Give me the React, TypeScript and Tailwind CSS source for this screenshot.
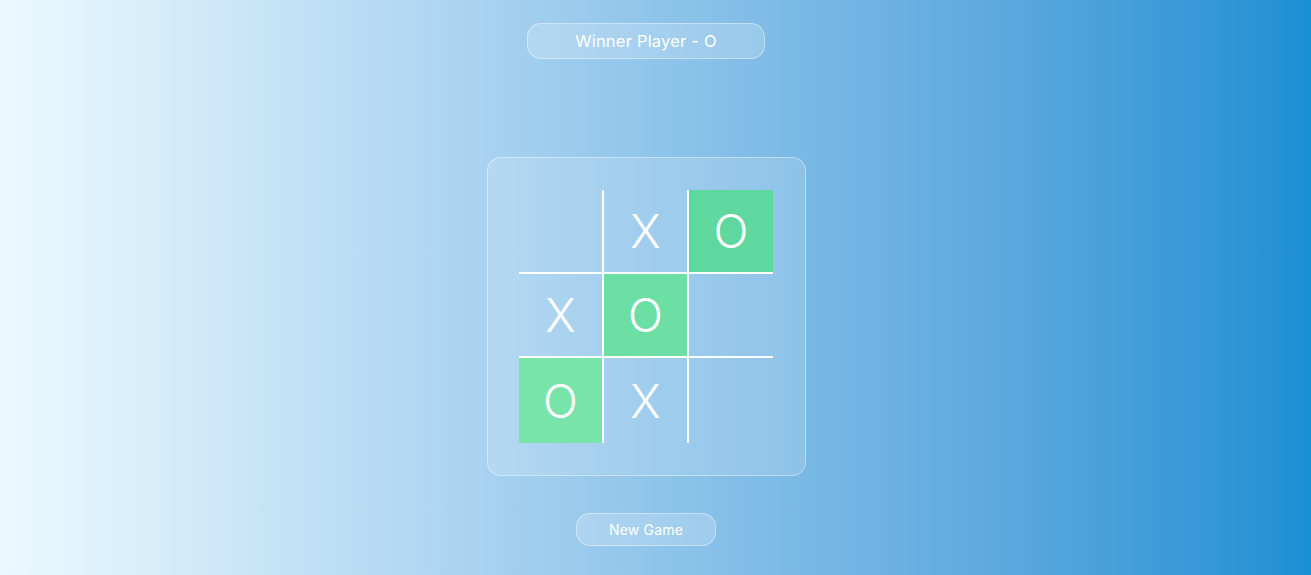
import React from 'react';

const board: { v: string; bg: string }[] = [
  { v: '', bg: '' },
  { v: 'X', bg: '' },
  { v: 'O', bg: 'bg-[#5fd8a0]' },
  { v: 'X', bg: '' },
  { v: 'O', bg: 'bg-[#6cdfa5]' },
  { v: '', bg: '' },
  { v: 'O', bg: 'bg-[#78e4a9]' },
  { v: 'X', bg: '' },
  { v: '', bg: '' },
];

const borders = [
  'border-r-2 border-b-2',
  'border-r-2 border-b-2',
  'border-b-2',
  'border-r-2 border-b-2',
  'border-r-2 border-b-2',
  'border-b-2',
  'border-r-2',
  'border-r-2',
  '',
];

export default function App() {
  return (
    <div
      className="w-full h-[575px] bg-gradient-to-r from-[#ecf9fe] to-[#1a8fd3] flex flex-col items-center pr-[19px] text-white"
      style={{ fontFamily: 'Inter, "Open Sans", sans-serif' }}
    >
      <div className="mt-[23px] w-[238px] h-[36px] rounded-[14px] border border-white/40 bg-white/20 flex items-center justify-center text-[16.5px] tracking-[0.2px]">
        Winner Player - O
      </div>

      <div className="mt-[98px] w-[319px] h-[319px] rounded-[14px] border border-white/40 bg-white/15 flex items-center justify-center">
        <div className="grid grid-cols-[85px_85px_84px] grid-rows-[84px_84px_85px]">
          {board.map((c, i) => (
            <div
              key={i}
              className={`border-white flex items-center justify-center text-[46px] font-light leading-none ${borders[i]} ${c.bg}`}
            >
              {c.v}
            </div>
          ))}
        </div>
      </div>

      <div className="mt-[37px] w-[140px] h-[33px] rounded-[14px] border border-white/40 bg-white/20 flex items-center justify-center text-[14px] tracking-[0.2px]">
        New Game
      </div>
    </div>
  );
}
